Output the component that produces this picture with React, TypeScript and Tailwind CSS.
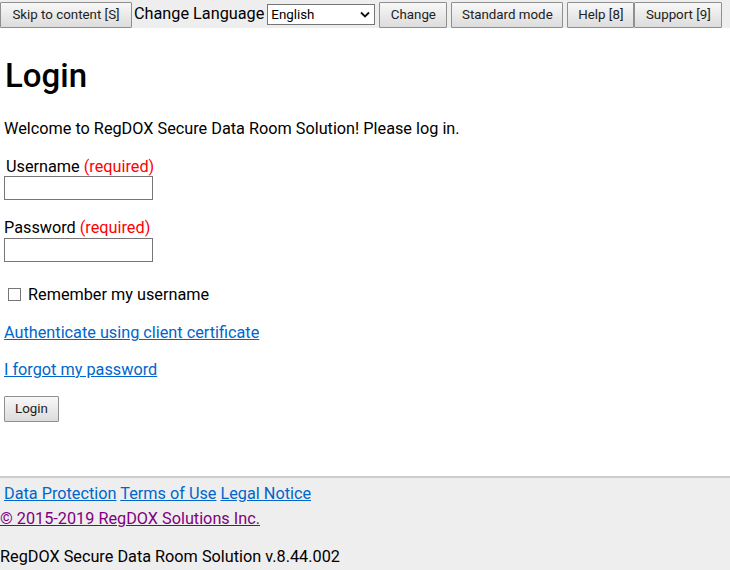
import React from "react";

const btn =
  "h-[26px] px-0 whitespace-nowrap text-[13.33px] text-[#222] border border-[#8f8f8f] rounded-[1px] bg-gradient-to-b from-[#f8f8f8] to-[#dcdcdc] leading-none shrink-0";

export default function App() {
  return (
    <div className="w-[730px] h-[570px] flex flex-col bg-white text-black" style={{ fontFamily: "Roboto, 'Liberation Sans', sans-serif" }}>
      <div className="h-[28px] bg-[#eeeeee] flex items-center pt-[1px] whitespace-nowrap">
        <button className={btn + " w-[132px]"}>Skip to content [S]</button>
        <span className="text-[16.25px] ml-[2px] mr-[3px]">Change Language</span>
        <div className="relative w-[108px] h-[21px] border border-[#767676] bg-white mr-[4px] flex items-center shrink-0">
          <span className="text-[13.33px] pl-[3px]">English</span>
          <svg className="absolute right-[4px] top-[6px]" width="10" height="7" viewBox="0 0 10 7">
            <path d="M1 1.5 L5 5.5 L9 1.5" stroke="#111" strokeWidth="1.8" fill="none" />
          </svg>
        </div>
        <button className={btn + " w-[68px] mr-[4px]"}>Change</button>
        <button className={btn + " w-[112px] mr-[4px]"}>Standard mode</button>
        <button className={btn + " w-[67px]"}>Help [8]</button>
        <button className={btn + " w-[88px]"}>Support [9]</button>
      </div>
      <div className="flex-1 px-[4px] text-[16.25px]">
        <h1 className="text-[33px] font-medium mt-[29px] ml-[1px] leading-[37px]">Login</h1>
        <p className="mt-[25px] leading-[19px]">Welcome to RegDOX Secure Data Room Solution! Please log in.</p>
        <div className="mt-[19px] ml-[2px] leading-[19px]">
          Username <span className="text-[#ff0000]">(required)</span>
        </div>
        <div className="w-[149px] h-[24px] border border-[#767676] mt-[0px]" />
        <div className="mt-[18px] leading-[19px]">
          Password <span className="text-[#ff0000]">(required)</span>
        </div>
        <div className="w-[149px] h-[24px] border border-[#767676] mt-[1px]" />
        <div className="mt-[23px] flex items-center leading-[19px]">
          <div className="w-[13px] h-[13px] border border-[#767676] ml-[4px] mr-[7px]" />
          <span>Remember my username</span>
        </div>
        <div className="mt-[19px] leading-[19px]">
          <a className="text-[#0066cc] underline">Authenticate using client certificate</a>
        </div>
        <div className="mt-[18px] leading-[19px]">
          <a className="text-[#0066cc] underline">I forgot my password</a>
        </div>
        <button className={btn + " mt-[17px] w-[55px]"}>Login</button>
      </div>
      <div className="h-[94px] bg-[#eeeeee] border-t-2 border-[#cccccc] text-[16.25px]">
        <div className="mt-[6px] ml-[4px] leading-[19px]">
          <a className="text-[#0066cc] underline">Data Protection</a>{" "}
          <a className="text-[#0066cc] underline">Terms of Use</a>{" "}
          <a className="text-[#0066cc] underline">Legal Notice</a>
        </div>
        <div className="mt-[6px] leading-[19px]">
          <a className="text-[#800080] underline">© 2015-2019 RegDOX Solutions Inc.</a>
        </div>
        <div className="mt-[19px] leading-[19px]">RegDOX Secure Data Room Solution v.8.44.002</div>
      </div>
    </div>
  );
}
